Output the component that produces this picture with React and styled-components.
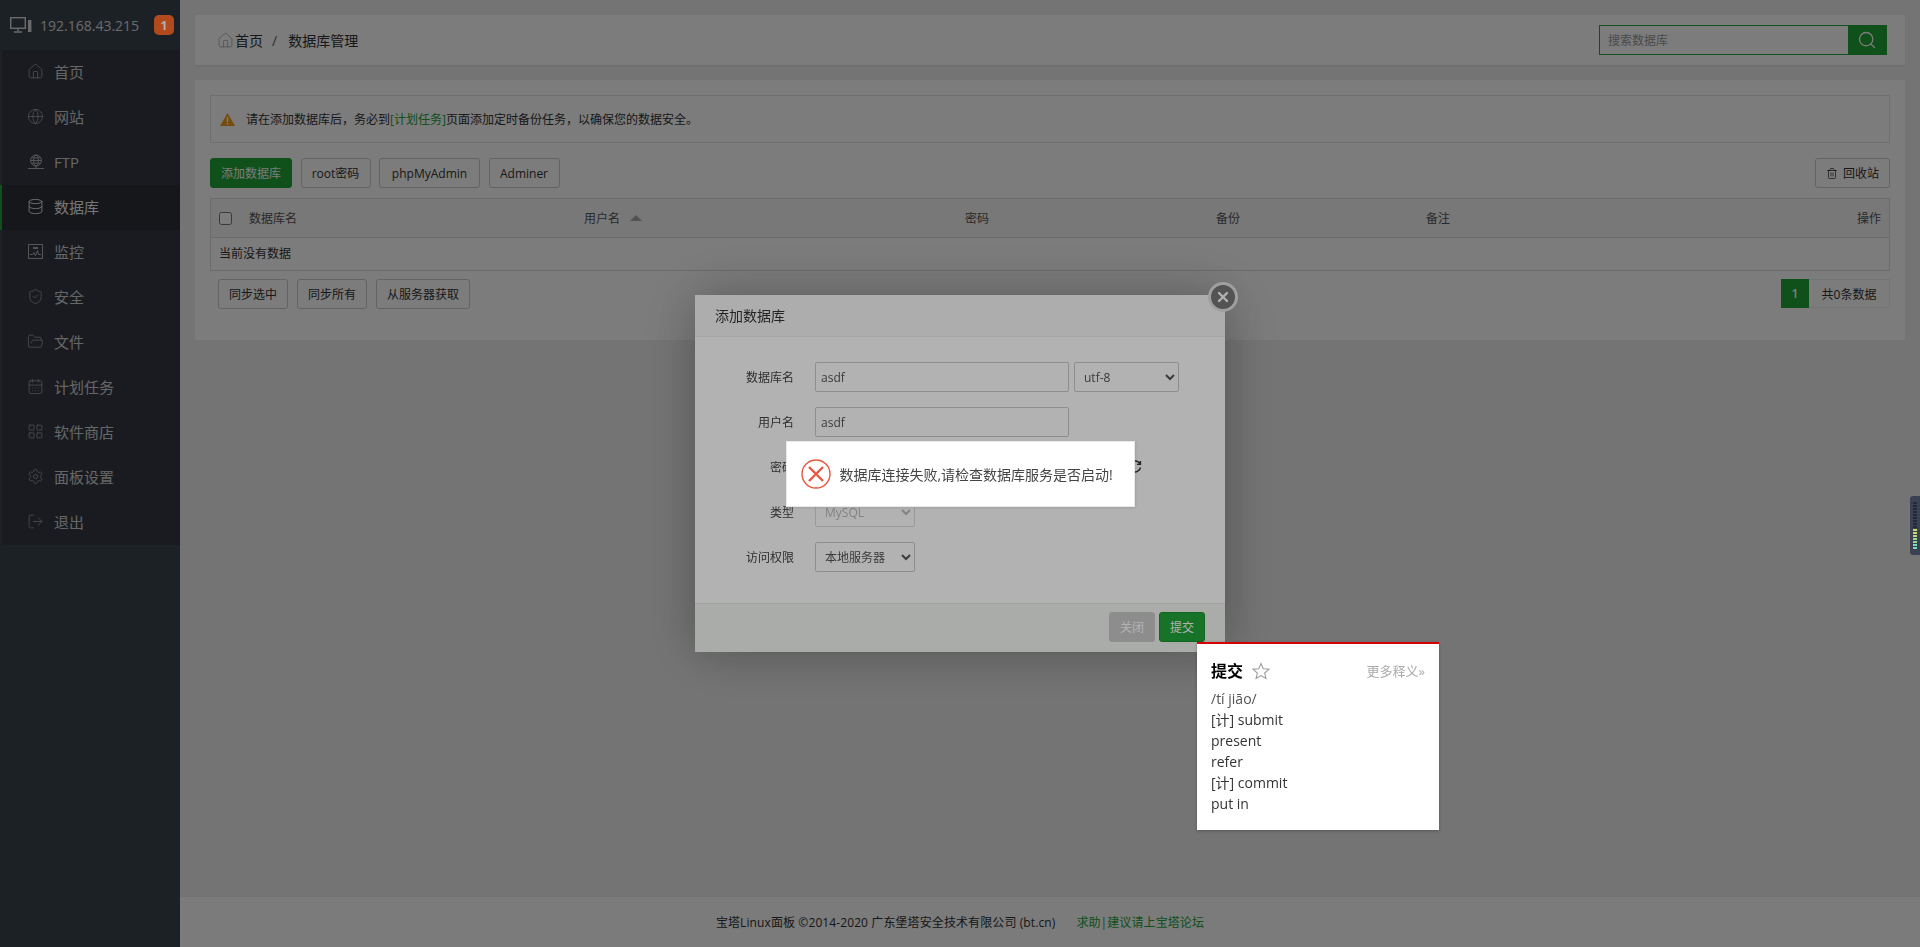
import React from 'react';
import styled, { createGlobalStyle } from 'styled-components';
import { House, Globe, Database, ShieldCheck, FolderOpen, CalendarDays, LayoutGrid, Settings, LogOut, Search, Trash2 } from 'lucide-react';

const GlobalStyle = createGlobalStyle`
  html, body { margin: 0; padding: 0; height: 100%; overflow: hidden; }
  body {
    font-family: "Open Sans", "Noto Sans CJK SC", sans-serif;
    font-size: 12px;
    color: #333;
    background: #f0f0f0;
  }
  * { box-sizing: border-box; }
`;

const Page = styled.div`
  display: flex;
  width: 1920px;
  height: 947px;
`;

const Sidebar = styled.aside`
  width: 180px;
  flex: none;
  background: #3c4650;
  display: flex;
  flex-direction: column;
`;

const LogoBar = styled.div`
  height: 50px;
  display: flex;
  align-items: center;
  padding-left: 10px;
  gap: 8px;
  color: #dcdcdc;
  font-size: 14px;
`;

const NavList = styled.nav`
  display: flex;
  flex-direction: column;
`;

const NavItem = styled.a`
  height: 45px;
  display: flex;
  align-items: center;
  gap: 10px;
  padding: 0 0 2px 25px;
  font-size: 15px;
  border-left: 2px solid ${p => (p.$active ? '#20a53a' : '#3c4650')};
  background: ${p => (p.$active ? '#2e3138' : '#353a45')};
  color: ${p => (p.$active ? '#f4f4f4' : '#d2d2d2')};
  svg { flex: none; color: ${p => (p.$active ? '#e8e8e8' : '#aeb0b2')}; }
`;

const IconSlot = styled.span`
  width: 17px;
  height: 17px;
  flex: none;
  display: flex;
  align-items: center;
  justify-content: center;
`;

const Main = styled.main`
  flex: 1;
  display: flex;
  flex-direction: column;
  min-width: 0;
`;

const Content = styled.div`
  flex: 1;
  padding: 15px 15px 0;
  display: flex;
  flex-direction: column;
  gap: 15px;
`;

const TopCard = styled.div`
  height: 50px;
  background: #fff;
  box-shadow: 0 1px 2px rgba(0, 0, 0, 0.08);
  display: flex;
  align-items: center;
  justify-content: space-between;
  padding: 0 18px 0 22px;
`;

const Crumbs = styled.div`
  display: flex;
  align-items: center;
  font-size: 14px;
  svg { color: #999; margin-right: 1px; }
`;

const CrumbSep = styled.span`
  margin: 0 11px 0 9px;
  color: #666;
`;

const SearchBox = styled.div`
  width: 288px;
  height: 30px;
  display: flex;
  border: 1px solid #20a53a;
`;

const SearchInput = styled.input`
  flex: 1;
  min-width: 0;
  border: 0;
  outline: 0;
  padding: 0 8px;
  font: inherit;
  background: #fff;
  &::placeholder { color: #999; }
`;

const SearchButton = styled.button`
  width: 38px;
  border: 0;
  padding: 0;
  background: #20a53a;
  color: #fff;
  display: flex;
  align-items: center;
  justify-content: center;
`;

const MainCard = styled.section`
  height: 260px;
  background: #fff;
  padding: 15px;
`;

const Notice = styled.div`
  height: 48px;
  border: 1px solid #e6e6e6;
  display: flex;
  align-items: center;
  padding-left: 9px;
  gap: 11px;
`;

const GreenText = styled.span`
  color: #20a53a;
`;

const Toolbar = styled.div`
  display: flex;
  align-items: center;
  gap: 8.5px;
  margin: 15px 0 10px;
`;

const Btn = styled.button`
  height: 30px;
  width: ${p => (p.$w ? `${p.$w}px` : 'auto')};
  padding: 0 10px;
  margin-left: ${p => (p.$push ? 'auto' : '0')};
  border: 1px solid ${p => (p.$green ? '#20a53a' : '#ccc')};
  border-radius: 3px;
  background: ${p => (p.$green ? '#20a53a' : '#fff')};
  color: ${p => (p.$green ? '#fff' : '#333')};
  font: inherit;
  display: flex;
  align-items: center;
  justify-content: center;
  gap: 5px;
  white-space: nowrap;
`;

const Table = styled.div`
  border: 1px solid #ddd;
`;

const HeadRow = styled.div`
  height: 39px;
  display: grid;
  grid-template-columns: 30px 335px 381px 251px 210px 1fr;
  align-items: center;
  padding: 0 8px;
  background: #f6f6f6;
  border-bottom: 1px solid #ddd;
  color: #555;
`;

const Check = styled.input`
  margin: 0;
  width: 13px;
  height: 13px;
`;

const SortCell = styled.span`
  display: flex;
  align-items: center;
  gap: 10px;
`;

const SortUp = styled.i`
  width: 0;
  height: 0;
  border-left: 6px solid transparent;
  border-right: 6px solid transparent;
  border-bottom: 6px solid #aaa;
`;

const LastCell = styled.div`
  display: flex;
  justify-content: space-between;
`;

const EmptyRow = styled.div`
  height: 32px;
  line-height: 32px;
  padding-left: 8px;
`;

const TableFoot = styled.div`
  display: flex;
  align-items: flex-start;
  justify-content: space-between;
  margin-top: 8px;
  padding-left: 8px;
`;

const FootButtons = styled.div`
  display: flex;
  gap: 9px;
`;

const Pager = styled.div`
  display: flex;
  height: 29px;
`;

const PageNum = styled.span`
  width: 28px;
  background: #20a53a;
  color: #fff;
  display: flex;
  align-items: center;
  justify-content: center;
  font-weight: 600;
`;

const PageInfo = styled.span`
  width: 81px;
  border: 1px solid #eee;
  border-left: 0;
  display: flex;
  align-items: center;
  justify-content: center;
`;

const Footer = styled.footer`
  height: 50px;
  flex: none;
  background: #fcfcfc;
  display: flex;
  align-items: center;
  justify-content: center;
  gap: 21px;
  padding-right: 180px;
  letter-spacing: 0.1px;
`;

const Shade = styled.div`
  position: fixed;
  inset: 0;
  background: rgba(0, 0, 0, 0.3);
  display: flex;
  align-items: center;
  justify-content: center;
`;

const Badge = styled.span`
  position: fixed;
  left: 154px;
  top: 15px;
  width: 20px;
  height: 20px;
  border-radius: 5px;
  background: #ff6a2a;
  color: #fff;
  font-size: 12px;
  font-weight: 700;
  display: flex;
  align-items: center;
  justify-content: center;
`;

const Modal = styled.div`
  position: relative;
  width: 530px;
  height: 357px;
  background: #fff;
  box-shadow: 1px 1px 50px rgba(0, 0, 0, 0.3);
  display: flex;
  flex-direction: column;
`;

const ModalTitle = styled.div`
  height: 42px;
  flex: none;
  display: flex;
  align-items: center;
  padding: 0 0 2px 20px;
  font-size: 14px;
  background: #f8f8f8;
  border-bottom: 1px solid #eee;
`;

const CloseBtn = styled.button`
  position: absolute;
  top: -13px;
  right: -13px;
  width: 30px;
  height: 30px;
  padding: 0;
  border-radius: 50%;
  border: 3px solid #e4e4e4;
  background: #777;
  color: #fff;
  display: flex;
  align-items: center;
  justify-content: center;
`;

const ModalBody = styled.div`
  flex: 1;
  padding-top: 25px;
  display: flex;
  flex-direction: column;
  gap: 15px;
`;

const FormRow = styled.div`
  height: 30px;
  display: flex;
  align-items: center;
`;

const FormLabel = styled.label`
  width: 99px;
  margin-right: 21px;
  text-align: right;
  flex: none;
  color: #444;
`;

const TextInput = styled.input`
  width: ${p => p.$w || 254}px;
  height: 30px;
  border: 1px solid #ccc;
  border-radius: 2px;
  padding: 0 5px;
  font: inherit;
  color: #555;
  background: #fff;
`;

const Select = styled.select`
  width: ${p => p.$w}px;
  height: 30px;
  margin-left: ${p => p.$ml || 0}px;
  border: 1px solid #ccc;
  border-radius: 2px;
  padding: 0 5px;
  font: inherit;
  color: #555;
  background: #fff;
  &:disabled { background: #fff; color: #bbb; border-color: #ddd; opacity: 1; }
`;

const RefreshIcon = styled.svg`
  margin-left: 6px;
  flex: none;
`;

const ModalFoot = styled.div`
  height: 49px;
  flex: none;
  background: #f3f6f3;
  border-top: 1px solid #e6e8e6;
  display: flex;
  justify-content: flex-end;
  align-items: flex-start;
  gap: 4px;
  padding: 8px 20px 0 0;
`;

const SmallBtn = styled.button`
  width: 46px;
  height: 30px;
  padding: 0;
  border: 1px solid ${p => (p.$green ? '#1c8f32' : '#cbcbcb')};
  border-radius: 3px;
  background: ${p => (p.$green ? '#20a53a' : '#cbcbcb')};
  color: #fff;
  font: inherit;
`;

const Toast = styled.div`
  width: 349px;
  height: 66px;
  background: #fff;
  border: 1px solid #e8e8e8;
  display: flex;
  align-items: center;
  gap: 9px;
  padding-left: 14px;
  font-size: 14px;
  color: #444;
  white-space: nowrap;
  box-shadow: 1px 1px 3px rgba(0, 0, 0, 0.1);
`;

const DictPopup = styled.div`
  position: fixed;
  left: 1197px;
  top: 642px;
  width: 242px;
  height: 188px;
  background: #fff;
  border-top: 2px solid #d40000;
  box-shadow: 0 1px 3px rgba(0, 0, 0, 0.25);
  padding: 16px 14px 15px;
  color: #333;
  font-size: 14px;
  line-height: 21px;
`;

const DictHead = styled.div`
  display: flex;
  align-items: center;
  height: 22px;
  margin-bottom: 6px;
`;

const DictWord = styled.strong`
  font-size: 16px;
  color: #000;
  margin-right: 9px;
`;

const DictMore = styled.span`
  margin-left: auto;
  font-size: 13px;
  color: #aaa;
`;

const DictPhon = styled.div`
  color: #555;
`;

const SideWidget = styled.div`
  position: fixed;
  right: 0;
  top: 496px;
  width: 10px;
  height: 59px;
  background: #3b4152;
  border-radius: 3px 0 0 3px;
  padding: 6px 0 0 3px;
  display: flex;
  flex-direction: column;
  gap: 1px;
`;

const Meter = styled.i`
  display: block;
  width: 4px;
  height: 2px;
  background: ${p => p.$c};
`;

const meterColors = ['#23283a', '#23283a', '#23283a', '#23283a', '#23283a', '#23283a', '#23283a', '#23283a', '#23283a', '#c6d96a', '#c6d96a', '#b4dc78', '#9bdc8c', '#8adc9c', '#7adcac', '#6adcbc'];

const LogoIcon = () => (
  <svg width="22" height="16" viewBox="0 0 22 16" fill="none" stroke="currentColor" strokeWidth="1.4">
    <rect x="0.7" y="0.7" width="14.6" height="10.6" />
    <path d="M8 11.5v2.5M4 15h8" />
    <rect x="18" y="3" width="3.4" height="12" fill="currentColor" stroke="none" />
  </svg>
);

const FtpIcon = () => (
  <svg width="16" height="16" viewBox="0 0 16 16" fill="none" stroke="currentColor" strokeWidth="1">
    <circle cx="8" cy="6.5" r="5.5" />
    <ellipse cx="8" cy="6.5" rx="2.4" ry="5.5" />
    <path d="M2.5 6.5h11M3.4 3.8h9.2M3.4 9.2h9.2M8 12v2M0 14.5h16" />
  </svg>
);

const MonitorIcon = () => (
  <svg width="15" height="15" viewBox="0 0 15 15" fill="none" stroke="currentColor" strokeWidth="1">
    <rect x="0.5" y="0.5" width="14" height="14" />
    <path d="M2 10.5h2.5l1.5-2 1.5 3 2-5 1 4h2.5" />
    <rect x="5" y="3" width="5" height="2" fill="currentColor" stroke="none" />
  </svg>
);

const navItems = [
  { label: '首页', icon: <House size={17} strokeWidth={1} /> },
  { label: '网站', icon: <Globe size={17} strokeWidth={1} /> },
  { label: 'FTP', icon: <FtpIcon /> },
  { label: '数据库', icon: <Database size={17} strokeWidth={1.3} />, active: true },
  { label: '监控', icon: <MonitorIcon /> },
  { label: '安全', icon: <ShieldCheck size={17} strokeWidth={1} /> },
  { label: '文件', icon: <FolderOpen size={17} strokeWidth={1} /> },
  { label: '计划任务', icon: <CalendarDays size={17} strokeWidth={1} /> },
  { label: '软件商店', icon: <LayoutGrid size={17} strokeWidth={1} /> },
  { label: '面板设置', icon: <Settings size={17} strokeWidth={1} /> },
  { label: '退出', icon: <LogOut size={17} strokeWidth={1} /> },
];

export default function App() {
  return (
    <>
      <GlobalStyle />
      <Page>
        <Sidebar>
          <LogoBar>
            <LogoIcon />
            <span>192.168.43.215</span>
          </LogoBar>
          <NavList>
            {navItems.map(item => (
              <NavItem key={item.label} $active={item.active}>
                <IconSlot>{item.icon}</IconSlot>
                <span>{item.label}</span>
              </NavItem>
            ))}
          </NavList>
        </Sidebar>
        <Main>
          <Content>
            <TopCard>
              <Crumbs>
                <House size={17} strokeWidth={1} />
                <span>首页</span>
                <CrumbSep>/</CrumbSep>
                <span>数据库管理</span>
              </Crumbs>
              <SearchBox>
                <SearchInput placeholder="搜索数据库" />
                <SearchButton><Search size={20} strokeWidth={1.6} /></SearchButton>
              </SearchBox>
            </TopCard>
            <MainCard>
              <Notice>
                <svg width="15" height="13" viewBox="0 0 15 13">
                  <path d="M7.5 0L15 13H0z" fill="#f39c1f" />
                  <path d="M6.8 4h1.4v5H6.8zM6.8 10h1.4v1.5H6.8z" fill="#fff" />
                </svg>
                <span>请在添加数据库后，务必到<GreenText>[计划任务]</GreenText>页面添加定时备份任务，以确保您的数据安全。</span>
              </Notice>
              <Toolbar>
                <Btn $green $w={82}>添加数据库</Btn>
                <Btn $w={70}>root密码</Btn>
                <Btn $w={101}>phpMyAdmin</Btn>
                <Btn $w={71}>Adminer</Btn>
                <Btn $push $w={75}><Trash2 size={15} strokeWidth={1.5} />回收站</Btn>
              </Toolbar>
              <Table>
                <HeadRow>
                  <Check type="checkbox" readOnly />
                  <span>数据库名</span>
                  <SortCell>用户名<SortUp /></SortCell>
                  <span>密码</span>
                  <span>备份</span>
                  <LastCell>
                    <span>备注</span>
                    <span>操作</span>
                  </LastCell>
                </HeadRow>
                <EmptyRow>当前没有数据</EmptyRow>
              </Table>
              <TableFoot>
                <FootButtons>
                  <Btn>同步选中</Btn>
                  <Btn>同步所有</Btn>
                  <Btn>从服务器获取</Btn>
                </FootButtons>
                <Pager>
                  <PageNum>1</PageNum>
                  <PageInfo>共0条数据</PageInfo>
                </Pager>
              </TableFoot>
            </MainCard>
          </Content>
          <Footer>
            <span>宝塔Linux面板 ©2014-2020 广东堡塔安全技术有限公司 (bt.cn)</span>
            <GreenText>求助|建议请上宝塔论坛</GreenText>
          </Footer>
        </Main>
      </Page>

      <Shade>
        <Badge>1</Badge>
        <Modal>
          <ModalTitle>添加数据库</ModalTitle>
          <CloseBtn>
            <svg width="12" height="12" viewBox="0 0 12 12" stroke="currentColor" strokeWidth="2.4" strokeLinecap="round"><path d="M2 2l8 8M10 2l-8 8" /></svg>
          </CloseBtn>
          <ModalBody>
            <FormRow>
              <FormLabel>数据库名</FormLabel>
              <TextInput defaultValue="asdf" />
              <Select $w={105} $ml={5} defaultValue="utf-8"><option>utf-8</option></Select>
            </FormRow>
            <FormRow>
              <FormLabel>用户名</FormLabel>
              <TextInput defaultValue="asdf" />
            </FormRow>
            <FormRow>
              <FormLabel>密码</FormLabel>
              <TextInput $w={307} defaultValue="" />
              <RefreshIcon width="14" height="14" viewBox="0 0 14 14" fill="none" stroke="#333" strokeWidth="1.4">
                <path d="M12 4A5.5 5.5 0 1 0 12.5 7.5M12.4 1v3.4H9" />
              </RefreshIcon>
            </FormRow>
            <FormRow>
              <FormLabel>类型</FormLabel>
              <Select $w={100} disabled defaultValue="MySQL"><option>MySQL</option></Select>
            </FormRow>
            <FormRow>
              <FormLabel>访问权限</FormLabel>
              <Select $w={100} defaultValue="本地服务器"><option>本地服务器</option></Select>
            </FormRow>
          </ModalBody>
          <ModalFoot>
            <SmallBtn>关闭</SmallBtn>
            <SmallBtn $green>提交</SmallBtn>
          </ModalFoot>
        </Modal>
      </Shade>

      <Shade>
        <Toast>
          <svg width="30" height="30" viewBox="0 0 30 30" fill="none" stroke="#e9573f">
            <circle cx="15" cy="15" r="14" strokeWidth="1.4" />
            <path d="M8 8l14 14M22 8L8 22" strokeWidth="2.4" />
          </svg>
          <span>数据库连接失败,请检查数据库服务是否启动!</span>
        </Toast>
      </Shade>

      <DictPopup>
        <DictHead>
          <DictWord>提交</DictWord>
          <svg width="18" height="18" viewBox="0 0 24 24" fill="none" stroke="#999" strokeWidth="1.4"><path d="M12 2l3 7 7.5.7-5.6 5 1.7 7.3L12 18l-6.6 4 1.7-7.3-5.6-5L9 9z" /></svg>
          <DictMore>更多释义»</DictMore>
        </DictHead>
        <DictPhon>/tí jiāo/</DictPhon>
        <div>[计] submit</div>
        <div>present</div>
        <div>refer</div>
        <div>[计] commit</div>
        <div>put in</div>
      </DictPopup>

      <SideWidget>
        {meterColors.map((c, i) => <Meter key={i} $c={c} />)}
      </SideWidget>
    </>
  );
}
